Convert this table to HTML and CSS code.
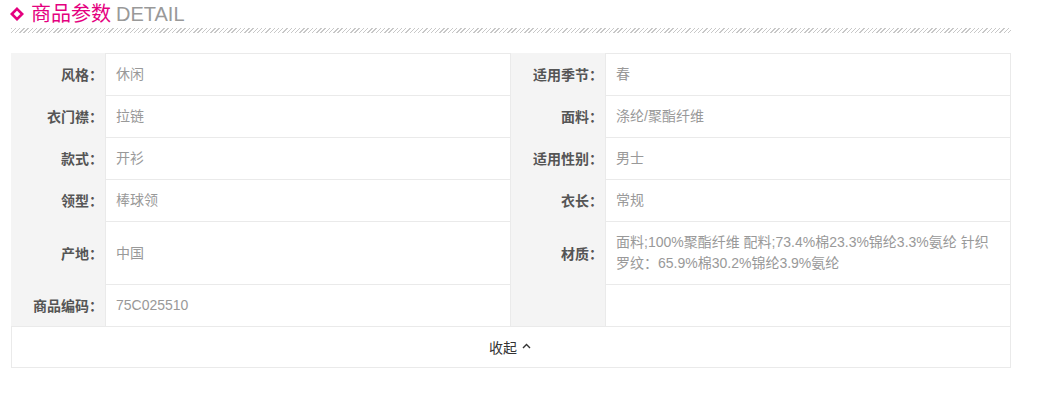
FILE: index.html
```html
<!DOCTYPE html>
<html lang="zh-CN">
<head>
<meta charset="utf-8">
<title>商品参数</title>
<link rel="stylesheet" href="styles.css">
</head>
<body>
<div class="wrap">
  <div class="head">
    <svg class="diamond" width="14" height="14" viewBox="0 0 14 14"><path d="M7 1.8 L12.2 7 L7 12.2 L1.8 7 Z" fill="none" stroke="#e4007f" stroke-width="2.6"/></svg>
    <span class="title-cn">商品参数</span>
    <span class="title-en">DETAIL</span>
  </div>
  <div class="stripe"></div>

  <div class="params">
    <div class="lab">风格：</div><div class="val">休闲</div>
    <div class="lab">适用季节：</div><div class="val">春</div>

    <div class="lab">衣门襟：</div><div class="val">拉链</div>
    <div class="lab">面料：</div><div class="val">涤纶/聚酯纤维</div>

    <div class="lab">款式：</div><div class="val">开衫</div>
    <div class="lab">适用性别：</div><div class="val">男士</div>

    <div class="lab">领型：</div><div class="val">棒球领</div>
    <div class="lab">衣长：</div><div class="val">常规</div>

    <div class="lab">产地：</div><div class="val vmid">中国</div>
    <div class="lab">材质：</div><div class="val">面料;100%聚酯纤维 配料;73.4%棉23.3%锦纶3.3%氨纶 针织<br>罗纹：65.9%棉30.2%锦纶3.9%氨纶</div>

    <div class="lab">商品编码：</div><div class="val">75C025510</div>
    <div class="lab"></div><div class="val"></div>
  </div>

  <div class="toggle">
    <span>收起</span>
    <svg class="caret" width="9" height="6" viewBox="0 0 9 6"><path d="M1 5 L4.5 1.5 L8 5" fill="none" stroke="#333" stroke-width="1.4"/></svg>
  </div>
</div>
</body>
</html>
```

FILE: styles.css
```css
html, body {
  margin: 0;
  padding: 0;
  background: #fff;
}

body {
  font-family: "Liberation Sans", Arial, "Noto Sans CJK SC", sans-serif;
  font-size: 14px;
}

.wrap {
  width: 1000px;
  padding-left: 11px;
}

.head {
  display: flex;
  align-items: center;
  height: 26px;
  padding-top: 1px;
  line-height: 26px;
  font-size: 20px;
}

.diamond {
  margin-left: -1px;
  margin-right: 7px;
  display: block;
}

.title-cn {
  color: #e4007f;
}

.title-en {
  color: #999;
  margin-left: 5px;
}

.stripe {
  margin-top: 1px;
  height: 5px;
  background-image: repeating-linear-gradient(135deg, #c8c8c8 0 1px, transparent 1px 3px);
}

.params {
  margin-top: 20px;
  display: grid;
  grid-template-columns: 94px 406px 94px 406px;
}

.lab {
  background: #f4f4f4;
  color: #555;
  font-weight: bold;
  display: flex;
  align-items: center;
  justify-content: flex-end;
  padding-right: 2px;
}

.val {
  border: 1px solid #eaeaea;
  border-bottom: none;
  padding: 10px 10px;
  line-height: 21px;
  color: #999;
  min-height: 21px;
}

.vmid {
  display: flex;
  align-items: center;
}

.toggle {
  height: 40px;
  border: 1px solid #eaeaea;
  display: flex;
  align-items: center;
  justify-content: center;
  gap: 5px;
  color: #333;
  padding-right: 2px;
}

.caret {
  display: block;
  margin-top: -2px;
}
```
